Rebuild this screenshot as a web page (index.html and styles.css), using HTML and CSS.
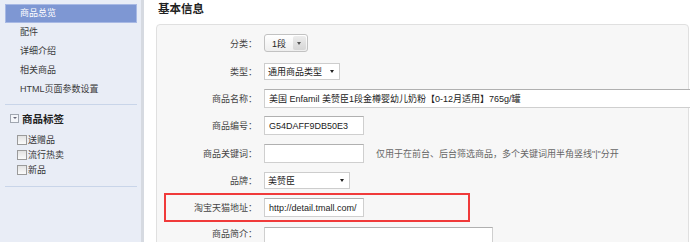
FILE: index.html
```html
<!DOCTYPE html>
<html lang="zh-CN">
<head>
    <meta charset="UTF-8">
    <title>商品编辑</title>
    <link rel="stylesheet" href="styles.css">
</head>
<body>
<div class="page">
    <div class="side">
        <ul class="menu">
            <li class="active">商品总览</li>
            <li>配件</li>
            <li>详细介绍</li>
            <li>相关商品</li>
            <li>HTML页面参数设置</li>
        </ul>
        <div class="tags">
            <div class="tags-head"><span class="fold"></span>商品标签</div>
            <label class="tag"><span class="check"></span>送赠品</label>
            <label class="tag"><span class="check"></span>流行热卖</label>
            <label class="tag"><span class="check"></span>新品</label>
        </div>
    </div>

    <div class="main">
        <h2 class="title">基本信息</h2>
        <div class="panel">
            <div class="row">
                <span class="label">分类：</span>
                <div class="sel-round"><span>1段</span><i class="btn"></i></div>
            </div>
            <div class="row">
                <span class="label">类型：</span>
                <div class="sel sel-type"><span>通用商品类型</span><i class="arrow"></i></div>
            </div>
            <div class="row short">
                <span class="label">商品名称：</span>
                <div class="input input-wide">美国 Enfamil 美赞臣1段金樽婴幼儿奶粉【0-12月适用】765g/罐</div>
            </div>
            <div class="row">
                <span class="label">商品编号：</span>
                <div class="input">G54DAFF9DB50E3</div>
            </div>
            <div class="row">
                <span class="label">商品关键词：</span>
                <div class="input"></div>
                <span class="hint">仅用于在前台、后台筛选商品，多个关键词用半角竖线"|"分开</span>
            </div>
            <div class="row short">
                <span class="label">品牌：</span>
                <div class="sel sel-brand"><span>美赞臣</span><i class="arrow"></i></div>
            </div>
            <div class="row mark">
                <span class="label">淘宝天猫地址：</span>
                <div class="input">http://detail.tmall.com/</div>
            </div>
            <div class="row area-row">
                <span class="label">商品简介：</span>
                <div class="textarea"></div>
            </div>
        </div>
    </div>
</div>
</body>
</html>
```

FILE: styles.css
```css
body {
    margin: 0;
    font-family: "Liberation Sans", "Noto Sans CJK SC", sans-serif;
    font-size: 9px;
    color: #333;
    background: #fff;
}
.page {
    display: flex;
    height: 242px;
    overflow: hidden;
}

/* 左侧栏 */
.side {
    flex-shrink: 0;
    background: #e9edf6;
    border-right: 3px solid #d6dae1;
    box-sizing: border-box;
    width: 144px;
    padding: 4px 4px 0 5px;
}
.menu {
    list-style: none;
    margin: 0;
    padding: 0 0 5px;
    border-bottom: 1px solid #c9d5e9;
}
.menu li {
    height: 19px;
    line-height: 19px;
    padding-left: 15px;
    box-sizing: border-box;
    color: #3a3a3a;
}
.menu li.active {
    background: #7e97d3;
    border: 1px solid #a8b9e4;
    color: #fff;
    line-height: 17px;
    padding-left: 14px;
}
.tags {
    padding: 6px 0 9px;
    border-bottom: 1px solid #c9d5e9;
}
.tags-head {
    display: flex;
    align-items: center;
    height: 15px;
    font-size: 10.5px;
    font-weight: bold;
    color: #222;
    margin-bottom: 6px;
}
.fold {
    width: 7px;
    height: 7px;
    border: 1px solid #a0a6b0;
    background: #f4f6fa;
    margin: 0 3px 0 5px;
    position: relative;
}
.fold::after {
    content: "";
    position: absolute;
    left: 2px;
    top: 2px;
    border-left: 2px solid transparent;
    border-right: 2px solid transparent;
    border-top: 2px solid #667;
}
.tag {
    display: flex;
    align-items: center;
    height: 15px;
    padding-left: 12px;
    color: #333;
}
.check {
    width: 8px;
    height: 8px;
    border: 1px solid #9a9a9a;
    background: linear-gradient(#e2e2e2, #fbfbfb);
    margin-right: 1px;
}

/* 右侧主体 */
.main {
    flex: 1;
    padding: 0 1px 0 12px;
    min-width: 0;
}
.title {
    margin: 0;
    height: 24px;
    line-height: 18px;
    font-size: 11.5px;
    font-weight: bold;
    color: #222;
    padding-left: 2px;
}
.panel {
    background: #f7f7f7;
    border: 1px solid #e0e0e0;
    border-radius: 4px;
    padding-top: 4px;
    height: 240px;
}
.row {
    display: flex;
    align-items: center;
    height: 28px;
}
.row.short { height: 26px; }
.label {
    width: 100px;
    margin-right: 7px;
    text-align: right;
    color: #444;
    flex-shrink: 0;
}
.row.mark {
    height: 29px;
    box-sizing: border-box;
    width: 306px;
    margin-left: 7px;
    border: 2px solid #f03a3a;
}
.row.mark .label { width: 91px; }
.row.area-row {
    align-items: flex-start;
    padding-top: 5px;
}
.row.area-row .label {
    padding-top: 2px;
    line-height: 11px;
}

.input {
    width: 100px;
    height: 19px;
    line-height: 18px;
    box-sizing: border-box;
    padding: 0 4px;
    background: #fff;
    border: 1px solid #cfcfcf;
    border-top-color: #b0b0b0;
    color: #222;
    white-space: nowrap;
    overflow: hidden;
    flex-shrink: 0;
}
.input-wide { width: 430px; }
.textarea {
    width: 229px;
    height: 40px;
    background: #fff;
    border: 1px solid #cfcfcf;
    border-top-color: #b0b0b0;
    box-sizing: border-box;
}
.hint {
    margin-left: 12px;
    color: #666;
    white-space: nowrap;
}

.sel-round {
    width: 44px;
    height: 18px;
    box-sizing: border-box;
    border: 1px solid #c2c2c2;
    border-radius: 3px;
    background: linear-gradient(#fff, #eee);
    display: flex;
    align-items: center;
    padding-left: 7px;
    position: relative;
    color: #222;
}
.sel-round .btn {
    position: absolute;
    right: 1px;
    top: 1px;
    bottom: 1px;
    width: 13px;
    border-radius: 2px;
    background: linear-gradient(#ececec, #d6d6d6);
}
.sel-round .btn::after {
    content: "";
    position: absolute;
    left: 4px;
    top: 6px;
    border-left: 2.5px solid transparent;
    border-right: 2.5px solid transparent;
    border-top: 3px solid #555;
}
.sel {
    height: 17px;
    box-sizing: border-box;
    border: 1px solid #cdcdcd;
    background: #fff;
    display: flex;
    align-items: center;
    padding-left: 3px;
    position: relative;
    color: #222;
}
.sel-type { width: 76px; }
.sel-brand { width: 86px; }
.sel .arrow {
    position: absolute;
    right: 5px;
    top: 6px;
    border-left: 2.5px solid transparent;
    border-right: 2.5px solid transparent;
    border-top: 3px solid #222;
}
```
